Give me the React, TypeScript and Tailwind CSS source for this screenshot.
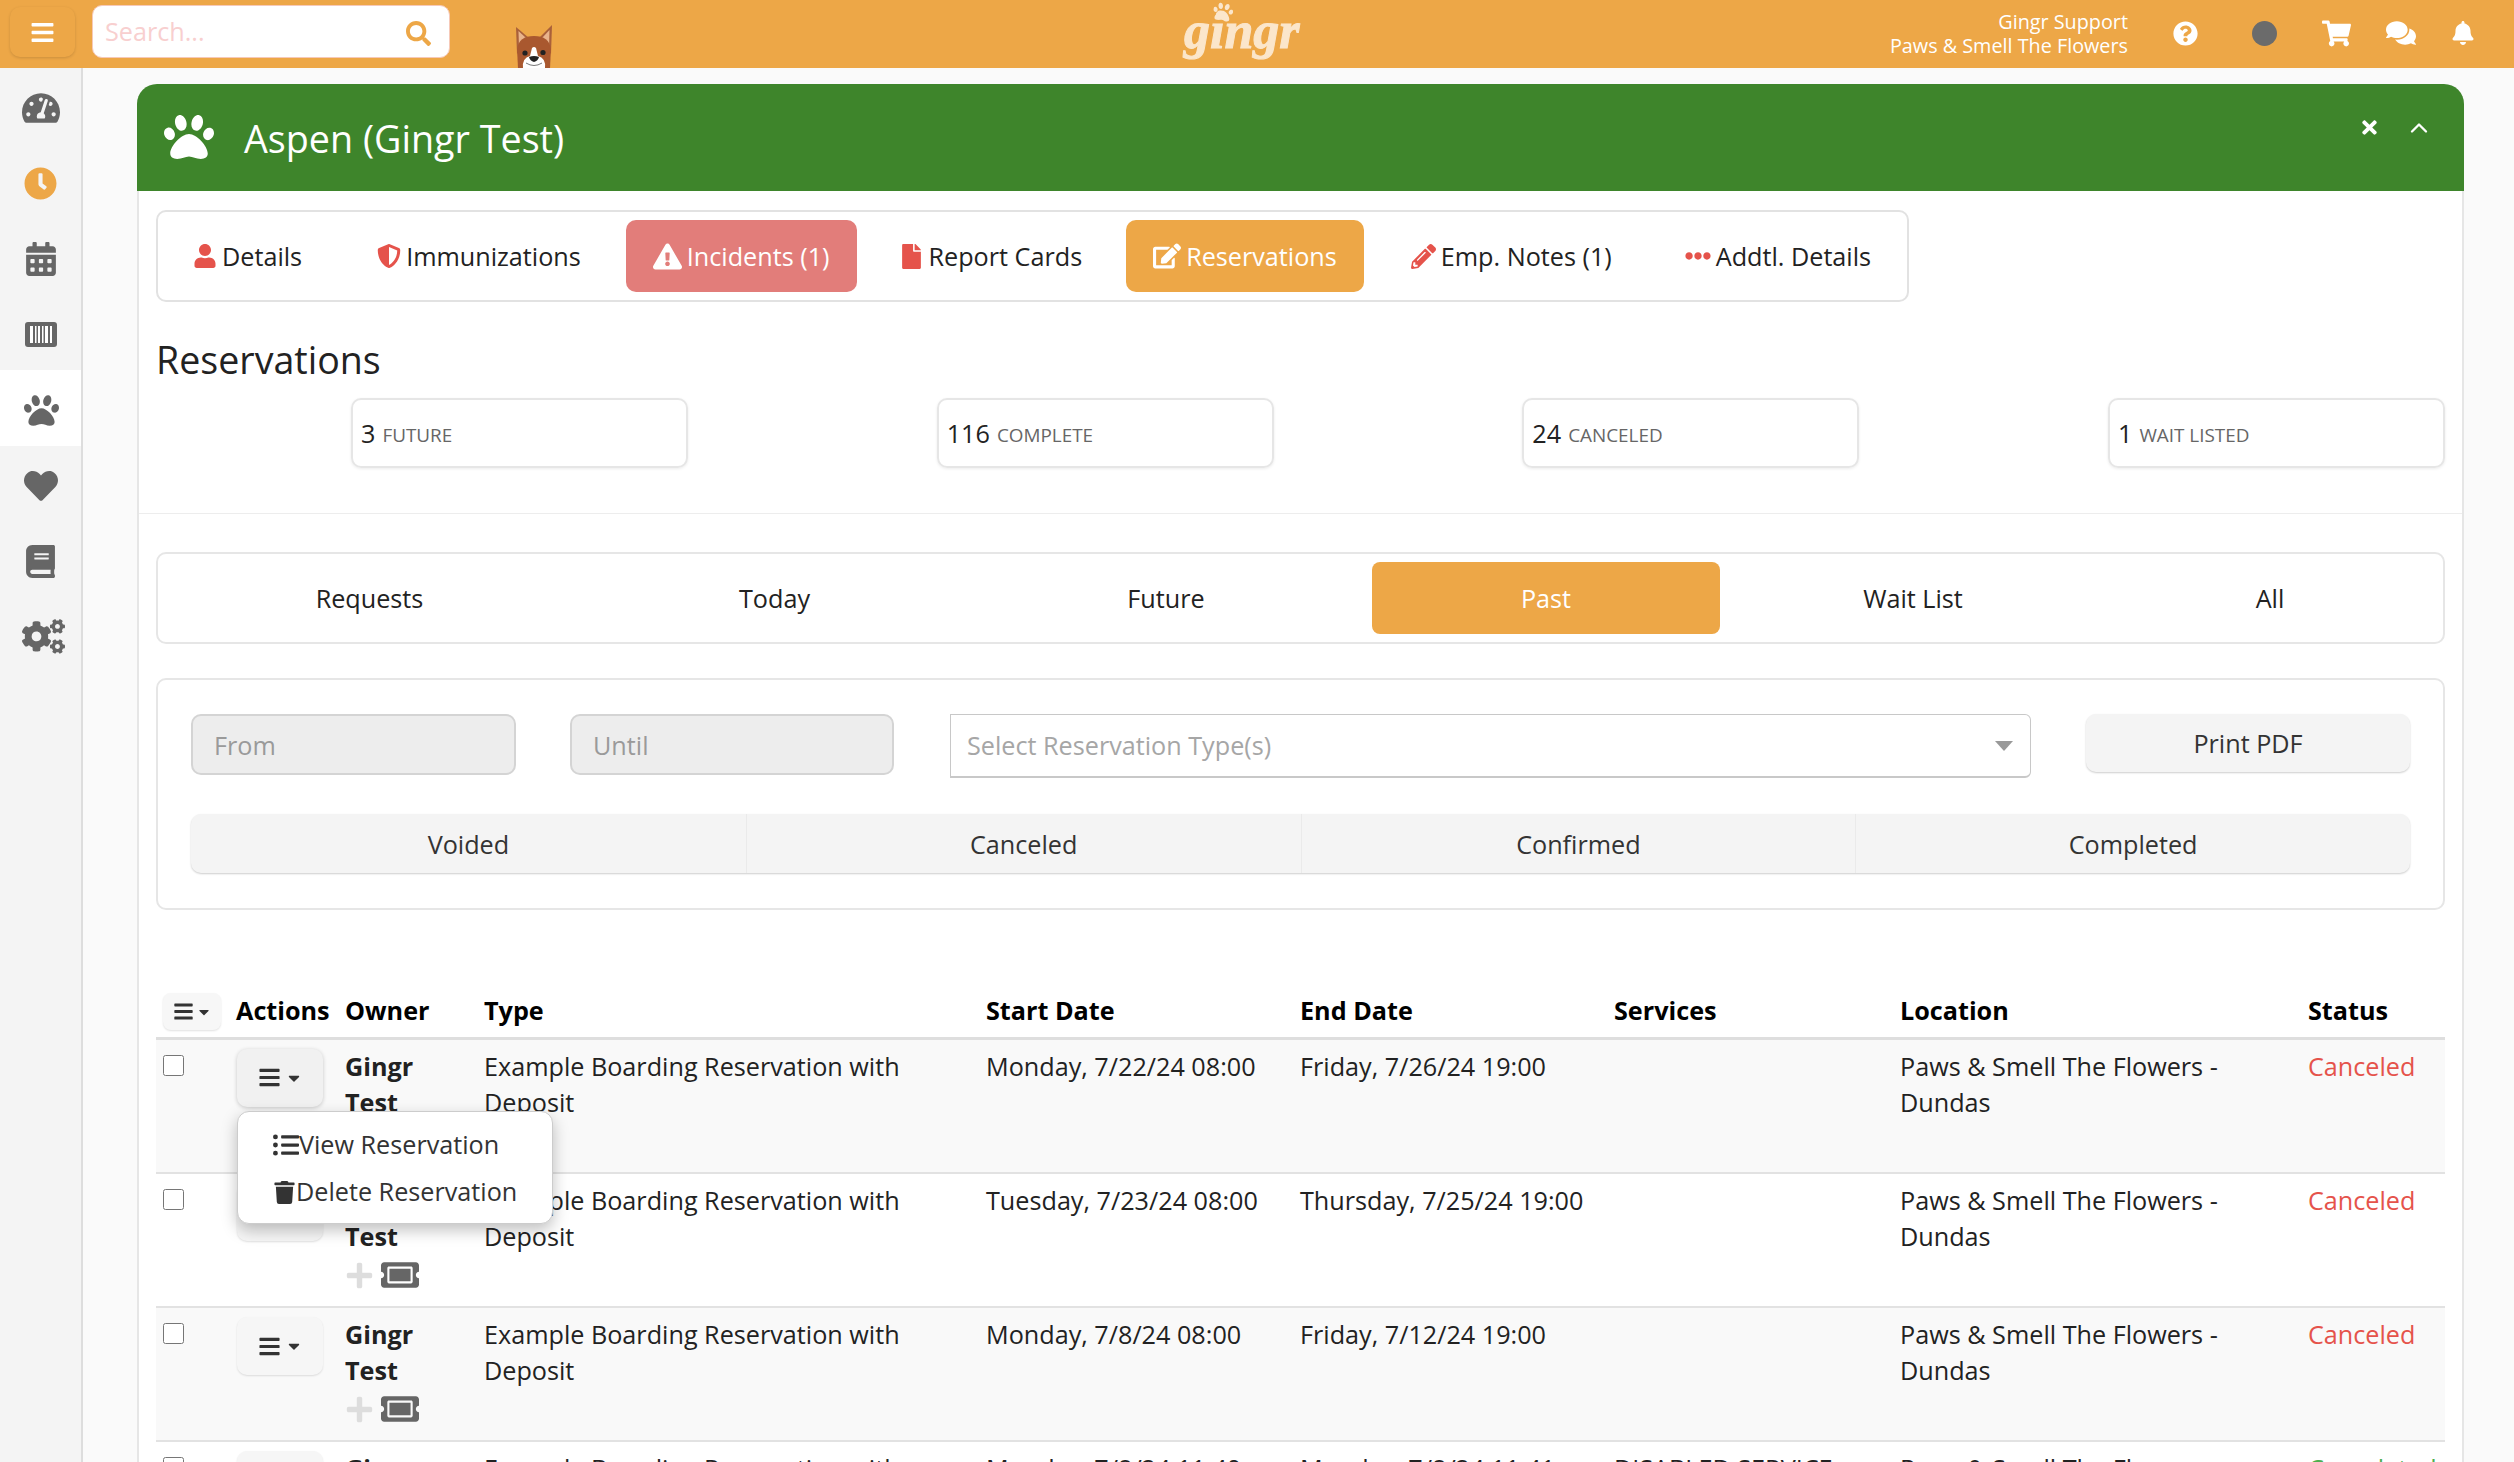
import { ChevronUp } from 'lucide-react';
import {
  FaBars,
  FaBell,
  FaBook,
  FaCalendarAlt,
  FaCaretDown,
  FaClock,
  FaCogs,
  FaComments,
  FaEdit,
  FaEllipsisH,
  FaExclamationTriangle,
  FaFile,
  FaHeart,
  FaListUl,
  FaPaw,
  FaPencilAlt,
  FaPlus,
  FaQuestionCircle,
  FaSearch,
  FaShieldAlt,
  FaShoppingCart,
  FaTachometerAlt,
  FaTicketAlt,
  FaTimes,
  FaTrash,
  FaUser,
} from 'react-icons/fa';

function BarcodeIcon() {
  return (
    <svg width="32" height="25" viewBox="0 0 32 25">
      <rect width="32" height="25" rx="3" fill="#666" />
      <path d="M5 4h3v17H5zM10 4h1.5v17H10zM13 4h2v17h-2zM17 4h1.5v17H17zM20 4h3v17h-3zM25 4h2v17h-2z" fill="#fff" />
    </svg>
  );
}

function DogIcon() {
  return (
    <svg width="40" height="44" viewBox="0 0 40 44" className="self-end">
      <path d="M3 30 L2 3 L15 14 Z" fill="#a9603a" />
      <path d="M5 24 L4.5 7 L12 14 Z" fill="#e9b48c" />
      <path d="M37 30 L38 1 L25 14 Z" fill="#a9603a" />
      <path d="M35 24 L35.5 6 L28 14 Z" fill="#e9b48c" />
      <path d="M4 44 L3 25 Q5 12 20 12 Q35 12 37 25 L36 44 Z" fill="#a9582f" />
      <path d="M18 24 Q20 22 22 24 L24 32 Q32 34 31 44 L9 44 Q8 34 16 32 Z" fill="#fff" />
      <circle cx="11" cy="29" r="2.6" fill="#222" />
      <circle cx="29" cy="28.5" r="2.6" fill="#222" />
      <path d="M15 33 Q20 31 25 33 Q24 37 20 38 Q16 37 15 33 Z" fill="#222" />
      <path d="M12 39 Q20 44 28 39" stroke="#777" strokeWidth="1" fill="none" />
    </svg>
  );
}

const sideItems = [
  { icon: <FaTachometerAlt size={38} />, active: false },
  { icon: <FaClock size={33} className="text-[#eda747]" />, active: false },
  { icon: <FaCalendarAlt size={34} />, active: false },
  { icon: <BarcodeIcon />, active: false },
  { icon: <FaPaw size={35} className="ml-[2px]" />, active: true },
  { icon: <FaHeart size={34} />, active: false },
  { icon: <FaBook size={33} />, active: false },
  { icon: <FaCogs size={43} className="ml-[6px]" />, active: false },
];

function Sidebar() {
  return (
    <aside className="w-[83px] shrink-0 border-r-2 border-[#dddddd] bg-[#f4f4f4] pt-[2px] text-[#666666]">
      {sideItems.map((item, i) => (
        <div
          key={i}
          className={
            item.active
              ? '-mt-[2px] mb-[2px] flex h-[76px] items-center justify-center bg-white pt-[4px]'
              : 'flex h-[75.5px] items-center justify-center'
          }
        >
          {item.icon}
        </div>
      ))}
    </aside>
  );
}

function TopBar() {
  return (
    <header className="flex h-[68px] shrink-0 items-start bg-[#eda747] text-white">
      <button className="ml-[10px] mt-[7px] flex h-[50px] w-[65px] items-center justify-center rounded-[10px] bg-[#eda747] shadow-[0_1px_3px_rgba(0,0,0,0.15)]">
        <FaBars size={25} />
      </button>
      <div className="ml-[17px] mt-[5px] flex h-[53px] w-[358px] items-center justify-between rounded-[10px] border border-[#f6c9b8] bg-white pl-[12px] pr-[18px]">
        <span className="text-[25.2px] text-[#f8cfcf]">Search...</span>
        <FaSearch size={25} className="mt-[3px] text-[#eda747]" />
      </div>
      <div className="ml-[64px] flex h-[68px] items-end">
        <DogIcon />
      </div>
      <div className="relative ml-[630px] h-[68px] w-[122px]">
        <FaPaw size={20} className="absolute left-[29px] top-[2px] rotate-[10deg] text-[#fbe6cb]" />
        <span className="absolute left-0 top-[4px] font-['Liberation_Serif',serif] text-[52px] font-bold italic leading-[54px] text-[#fbe6cb] [-webkit-text-stroke:1px_#fbe6cb]">
          gingr
        </span>
      </div>
      <div className="ml-[582px] w-[240px] pt-[10px] text-right text-[19.8px] leading-[24px]">
        <div className="whitespace-nowrap">Gingr Support</div>
        <div className="whitespace-nowrap">Paws &amp; Smell The Flowers</div>
      </div>
      <div className="ml-[45px] mt-[18px] flex items-center">
        <FaQuestionCircle size={25} />
        <span className="ml-[54px] h-[25px] w-[25px] rounded-full bg-[#6b6b6b]" />
        <FaShoppingCart size={29} className="ml-[45px]" />
        <FaComments size={30} className="ml-[35px]" />
        <FaBell size={24} className="ml-[35px]" />
      </div>
    </header>
  );
}

const tabs = [
  { label: 'Details', icon: <FaUser size={24} className="text-[#e5534b]" />, box: 'mr-[3px]' },
  { label: 'Immunizations', icon: <FaShieldAlt size={24} className="text-[#e5534b]" /> },
  { label: 'Incidents (1)', icon: <FaExclamationTriangle size={29} />, box: '-mr-[3px] bg-[#e27d7a] text-white' },
  { label: 'Report Cards', icon: <FaFile size={25} className="text-[#e5534b]" />, box: '-mr-[1px]' },
  { label: 'Reservations', icon: <FaEdit size={28} />, box: 'mr-[2px] bg-[#eda747] text-white' },
  { label: 'Emp. Notes (1)', icon: <FaPencilAlt size={25} className="text-[#e5534b]" />, box: 'mr-[1px]' },
  { label: 'Addtl. Details', icon: <FaEllipsisH size={26} className="text-[#e5534b]" /> },
];

function TabBar() {
  return (
    <div className="flex h-[92px] w-[1753px] items-center gap-[18px] rounded-[10px] border-2 border-[#e2e2e2] pl-[8px]">
      {tabs.map((t) => (
        <div
          key={t.label}
          className={`flex h-[72px] items-center gap-[5px] whitespace-nowrap rounded-[10px] px-[27px] ${t.box ?? ''}`}
        >
          {t.icon}
          <span className="pt-[2px]">{t.label}</span>
        </div>
      ))}
    </div>
  );
}

const stats = [
  { n: '3', label: 'Future' },
  { n: '116', label: 'Complete' },
  { n: '24', label: 'Canceled' },
  { n: '1', label: 'Wait Listed' },
];

function StatRow() {
  return (
    <div className="mt-[15px] flex justify-between pl-[195px]">
      {stats.map((s) => (
        <div
          key={s.label}
          className="flex h-[70px] w-[337px] items-center gap-[7px] rounded-[10px] border-2 border-[#e6e6e6] pl-[8px] pt-[2px] shadow-[0_1px_3px_rgba(0,0,0,0.08)]"
        >
          <span>{s.n}</span>
          <span className="pt-[3px] text-[18.9px] uppercase text-[#666666]">{s.label}</span>
        </div>
      ))}
    </div>
  );
}

const subTabs = [
  { label: 'Requests', w: 'w-[423px]' },
  { label: 'Today', w: 'w-[379px] pl-[8px]' },
  { label: 'Future', w: 'w-[412px]' },
  { label: 'Past', w: 'w-[348px] rounded-[8px] bg-[#eda747] text-white' },
  { label: 'Wait List', w: 'w-[386px]' },
  { label: 'All', w: 'w-[328px]' },
];

function SubTabs() {
  return (
    <div className="mt-[38px] flex h-[92px] items-center rounded-[10px] border-2 border-[#e6e6e6]">
      {subTabs.map((t) => (
        <div key={t.label} className={`flex h-[72px] items-center justify-center pt-[2px] ${t.w}`}>
          {t.label}
        </div>
      ))}
    </div>
  );
}

function Filters() {
  return (
    <div className="mt-[34px] rounded-[10px] border-2 border-[#e6e6e6] pb-[35px] pl-[33px] pr-[33px] pt-[34px]">
      <div className="flex h-[64px] items-start">
        <div className="flex h-[61px] w-[325px] items-center rounded-[10px] border-2 border-[#d4d4d4] bg-[#ededed] pl-[21px] pt-[2px] text-[#9a9a9a]">
          From
        </div>
        <div className="ml-[54px] flex h-[61px] w-[324px] items-center rounded-[10px] border-2 border-[#d4d4d4] bg-[#ededed] pl-[21px] pt-[2px] text-[#9a9a9a]">
          Until
        </div>
        <div className="ml-[56px] flex h-[64px] w-[1081px] items-center justify-between rounded-r-[6px] border border-b-2 border-[#c8c8c8] pl-[16px] pr-[17px] text-[#a6a6a6]">
          <span>Select Reservation Type(s)</span>
          <span className="h-0 w-0 border-x-[9px] border-t-[10px] border-x-transparent border-t-[#999999]" />
        </div>
        <div className="ml-[55px] flex h-[58px] w-[324px] items-center justify-center rounded-[10px] bg-[#f4f4f4] pt-[2px] text-[#333333] shadow-[0_1px_2px_rgba(0,0,0,0.2)]">
          Print PDF
        </div>
      </div>
      <div className="mt-[36px] grid h-[59px] grid-cols-4 rounded-[10px] bg-[#f4f4f4] text-[#333333] shadow-[0_1px_2px_rgba(0,0,0,0.2)]">
        {['Voided', 'Canceled', 'Confirmed', 'Completed'].map((s, i) => (
          <div
            key={s}
            className={
              i === 0
                ? 'flex items-center justify-center pt-[2px]'
                : 'flex items-center justify-center border-l border-[#eaeaea] pt-[2px]'
            }
          >
            {s}
          </div>
        ))}
      </div>
    </div>
  );
}

const rows = [
  { start: 'Monday, 7/22/24 08:00', end: 'Friday, 7/26/24 19:00', services: '', status: 'Canceled' },
  { start: 'Tuesday, 7/23/24 08:00', end: 'Thursday, 7/25/24 19:00', services: '', status: 'Canceled' },
  { start: 'Monday, 7/8/24 08:00', end: 'Friday, 7/12/24 19:00', services: '', status: 'Canceled' },
  { start: 'Monday, 7/8/24 11:40', end: 'Monday, 7/8/24 11:41', services: 'DISABLED SERVICE', status: 'Completed' },
];

function RowMenu() {
  return (
    <div className="absolute left-[7px] top-[71px] z-10 h-[113px] w-[316px] rounded-[12px] border border-[#cccccc] bg-white pl-[35px] pt-[10px] text-[#333333] shadow-[0_6px_16px_rgba(0,0,0,0.25)]">
      <div className="flex h-[47px] items-center">
        <FaListUl size={26} />
        <span>View Reservation</span>
      </div>
      <div className="flex h-[47px] items-center">
        <FaTrash size={23} />
        <span>Delete Reservation</span>
      </div>
    </div>
  );
}

function ReservationTable() {
  return (
    <table className="mt-[76px] w-full table-fixed border-collapse text-left">
      <colgroup>
        <col className="w-[74px]" />
        <col className="w-[109px]" />
        <col className="w-[139px]" />
        <col className="w-[502px]" />
        <col className="w-[314px]" />
        <col className="w-[314px]" />
        <col className="w-[286px]" />
        <col className="w-[408px]" />
        <col className="w-[143px]" />
      </colgroup>
      <thead>
        <tr className="h-[52px] border-b-[3px] border-[#dedede] font-bold text-black">
          <th className="px-[6px] pt-[1px] font-bold">
            <span className="ml-[1px] flex h-[37px] w-[58px] items-center justify-center rounded-[8px] bg-[#f7f7f7] text-[#333333] shadow-[0_1px_2px_rgba(0,0,0,0.12)]">
              <FaBars size={21} />
              <FaCaretDown size={16} className="ml-[2px]" />
            </span>
          </th>
          {['Actions', 'Owner', 'Type', 'Start Date', 'End Date', 'Services', 'Location', 'Status'].map((h) => (
            <th key={h} className="whitespace-nowrap px-[6px] font-bold">
              {h}
            </th>
          ))}
        </tr>
      </thead>
      <tbody>
        {rows.map((r, i) => (
          <tr
            key={i}
            className={
              i === 0
                ? 'h-[135px] border-b-2 border-[#e2e2e2] bg-[#f9f9f9]'
                : i % 2 === 0
                  ? 'h-[134px] border-b-2 border-[#e2e2e2] bg-[#f9f9f9]'
                  : 'h-[134px] border-b-2 border-[#e2e2e2] bg-white'
            }
          >
            <td className="px-[6px] pt-[15px] align-top">
              <input type="checkbox" readOnly className="ml-[1px] block h-[21px] w-[21px]" />
            </td>
            <td className="relative px-[6px] pt-[9px] align-top">
              <span
                className={
                  i === 0
                    ? 'ml-[1px] flex h-[58px] w-[86px] items-center justify-center rounded-[10px] bg-[#f1f1f1] text-[#333333] shadow-[0_1px_4px_rgba(0,0,0,0.2)]'
                    : 'ml-[1px] flex h-[58px] w-[86px] items-center justify-center rounded-[10px] bg-[#f6f6f6] text-[#333333] shadow-[0_1px_2px_rgba(0,0,0,0.12)]'
                }
              >
                <FaBars size={23} />
                <FaCaretDown size={18} className="ml-[4px]" />
              </span>
              {i === 0 && <RowMenu />}
            </td>
            <td className="px-[6px] pt-[8px] align-top font-bold leading-[36px] text-[#222222]">
              <div>Gingr</div>
              <div>Test</div>
              <div className="mt-[3px] flex h-[36px] items-center gap-[7px]">
                <FaPlus size={29} className="text-[#dddddd]" />
                <FaTicketAlt size={38} className="text-[#666666]" />
              </div>
            </td>
            <td className="px-[6px] pt-[8px] align-top leading-[36px]">Example Boarding Reservation with Deposit</td>
            <td className="whitespace-nowrap px-[6px] pt-[8px] align-top leading-[36px]">{r.start}</td>
            <td className="whitespace-nowrap px-[6px] pt-[8px] align-top leading-[36px]">{r.end}</td>
            <td className="whitespace-nowrap px-[6px] pt-[8px] align-top leading-[36px]">{r.services}</td>
            <td className="px-[6px] pt-[8px] align-top leading-[36px]">Paws &amp; Smell The Flowers - Dundas</td>
            <td
              className={
                r.status === 'Canceled'
                  ? 'px-[6px] pt-[8px] align-top leading-[36px] text-[#e5534b]'
                  : 'px-[6px] pt-[8px] align-top leading-[36px] text-[#4caf50]'
              }
            >
              {r.status}
            </td>
          </tr>
        ))}
      </tbody>
    </table>
  );
}

export default function App() {
  return (
    <div className="flex h-screen w-screen flex-col overflow-hidden bg-[#fafafa] font-['Open_Sans','Liberation_Sans',sans-serif] text-[25.2px] text-[#222222]">
      <TopBar />
      <div className="flex min-h-0 flex-1">
        <Sidebar />
        <main className="min-w-0 flex-1 overflow-hidden pl-[54px] pr-[50px] pt-[16px]">
          <div className="rounded-t-[20px] border-x-2 border-[#e6e6e6] bg-white">
            <div className="-mx-[2px] flex h-[107px] items-center justify-between rounded-t-[20px] bg-[#3e852b] text-white">
              <div className="flex items-center">
                <FaPaw size={50} className="ml-[27px]" />
                <span className="ml-[30px] pt-[4px] text-[37.7px]">Aspen (Gingr Test)</span>
              </div>
              <div className="mb-[20px] mr-[31px] flex items-center gap-[25px]">
                <FaTimes size={21} />
                <ChevronUp size={28} strokeWidth={2} />
              </div>
            </div>
            <div className="px-[17px] pt-[19px]">
              <TabBar />
              <h1 className="mt-[34px] text-[37.6px] leading-[48px]">Reservations</h1>
              <div className="-mt-[1px]">
                <StatRow />
              </div>
            </div>
            <div className="mt-[45px] border-t border-[#ededed]" />
            <div className="px-[17px]">
              <SubTabs />
              <Filters />
              <ReservationTable />
            </div>
          </div>
        </main>
      </div>
    </div>
  );
}
